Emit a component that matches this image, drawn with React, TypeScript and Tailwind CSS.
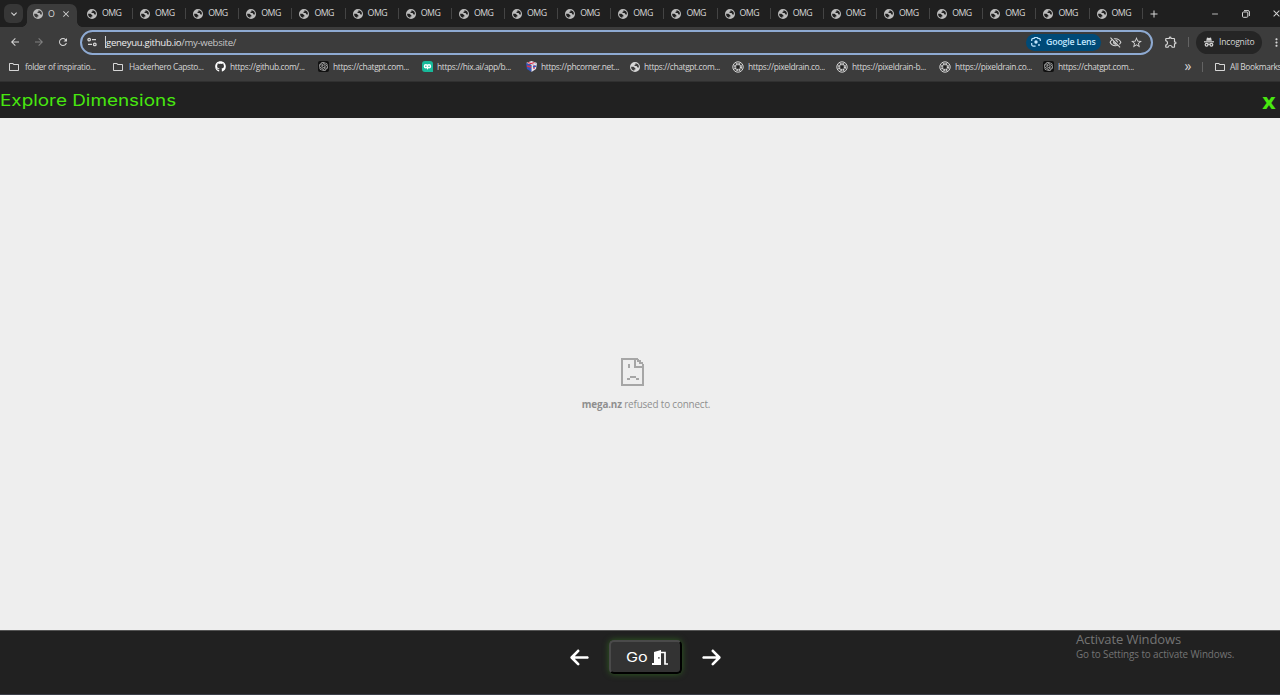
import { ReactNode } from 'react';
import clsx from 'clsx';
import { FaArrowLeft, FaArrowRight, FaGithub } from 'react-icons/fa6';
import {
  MdArrowBack,
  MdArrowForward,
  MdRefresh,
  MdClose,
  MdAdd,
  MdRemove,
  MdExpandMore,
  MdMoreVert,
  MdStarBorder,
  MdOutlineVisibilityOff,
  MdOutlineFolder,
  MdOutlineExtension,
} from 'react-icons/md';
import { SiOpenai } from 'react-icons/si';

type IconName = 'folder' | 'github' | 'openai' | 'hix' | 'corner' | 'globe' | 'drain';

const TABS = Array.from({ length: 20 }, (_, i) => i);

const BOOKMARKS: { icon: IconName; label: string; w: string }[] = [
  { icon: 'folder', label: 'folder of inspiratio...', w: 'w-[104px]' },
  { icon: 'folder', label: 'Hackerhero Capsto...', w: 'w-[103px]' },
  { icon: 'github', label: 'https://github.com/...', w: 'w-[103px]' },
  { icon: 'openai', label: 'https://chatgpt.com...', w: 'w-[104px]' },
  { icon: 'hix', label: 'https://hix.ai/app/b...', w: 'w-[104px]' },
  { icon: 'corner', label: 'https://phcorner.net...', w: 'w-[103px]' },
  { icon: 'globe', label: 'https://chatgpt.com...', w: 'w-[103px]' },
  { icon: 'drain', label: 'https://pixeldrain.co...', w: 'w-[104px]' },
  { icon: 'drain', label: 'https://pixeldrain-b...', w: 'w-[103px]' },
  { icon: 'drain', label: 'https://pixeldrain.co...', w: 'w-[104px]' },
  { icon: 'openai', label: 'https://chatgpt.com...', w: 'w-[103px]' },
];

export default function App() {
  return (
    <div className="flex h-[695px] w-[1280px] flex-col overflow-hidden border-b border-[#3a3d46] bg-[#212121] font-['Open_Sans','Noto_Sans',sans-serif] text-[8px] text-[#d6d6d6]">
      <TabStrip />
      <Toolbar />
      <BookmarksBar />

      {/* Page header */}
      <header className="flex h-[36px] shrink-0 items-center justify-between bg-[#212121] pr-1 text-[#48e80f]">
        <h1 className="origin-left scale-x-[1.18] whitespace-nowrap font-['Inter',sans-serif] text-[16px] leading-none">
          Explore Dimensions
        </h1>
        <button className="mb-px origin-right scale-x-[1.05] text-[22px] font-bold leading-none">x</button>
      </header>

      {/* Blocked frame */}
      <main className="flex h-[512px] shrink-0 flex-col items-center bg-[#eeeeee] pt-[240px] text-[#8f8f8f]">
        <div className="mr-[15px]">
          <SadPage />
        </div>
        <p className="ml-[12px] mt-[11px] whitespace-nowrap text-[9.9px] leading-[14px] tracking-[-0.16px]">
          <strong>mega.nz</strong> refused to connect.
        </p>
      </main>

      <footer className="relative flex grow items-start justify-center border-t border-[#555] bg-[#212121] pt-[9px] pl-[11px]">
        <div className="flex items-center gap-[19px] text-white">
          <FaArrowLeft className="size-[21px]" />
          <button className="flex h-[34px] w-[73px] items-center justify-center gap-[5px] rounded-[5px] border-2 border-t-[#4a4a4a] border-l-[#4a4a4a] border-b-black border-r-black bg-[#333] shadow-[0_0_6px_#2f5f20]">
            <span className="w-[23px] pt-[2px]">
              <span className="inline-block origin-left scale-x-[1.24] font-['Inter',sans-serif] text-[13px] leading-none">Go</span>
            </span>
            <DoorIcon />
          </button>
          <FaArrowRight className="size-[21px]" />
        </div>
        {/* System watermark floating over the bar */}
        <div className="absolute left-[1076px] top-0 whitespace-nowrap text-[#747474]">
          <p className="text-[13px] leading-[17px] tracking-[-0.1px]">Activate Windows</p>
          <p className="text-[9.9px] leading-[13px] tracking-[-0.1px]">Go to Settings to activate Windows.</p>
        </div>
      </footer>
    </div>
  );
}

function TabStrip() {
  return (
    <div className="flex h-[27px] shrink-0 items-center bg-[#1f1f1f]">
      <div className="ml-1 flex size-[19px] shrink-0 items-center justify-center rounded-[6px] bg-[#373737]">
        <MdExpandMore className="size-[12px]" />
      </div>
      <div className="relative ml-1 mt-1 flex h-[23px] w-[50px] shrink-0 items-center rounded-t-[7px] bg-[#3c3c3c] pb-[3px] pl-[6px]">
        {/* Flared feet of the active tab */}
        <span className="absolute bottom-0 left-[-5px] size-[5px] bg-[radial-gradient(circle_at_top_left,transparent_4.5px,#3c3c3c_5px)]" />
        <span className="absolute bottom-0 right-[-5px] size-[5px] bg-[radial-gradient(circle_at_top_right,transparent_4.5px,#3c3c3c_5px)]" />
        <GlobeIcon className="size-[10px] shrink-0 text-[#bdbdbd]" />
        <span className="ml-[5px] w-[9px] pt-px text-[8.8px]">O</span>
        <MdClose className="ml-[4px] size-[10px]" />
      </div>
      {TABS.map((i) => (
        <div key={i} className={clsx('flex h-[11px] w-[53.15px] shrink-0 items-center border-r border-[#444]', i === 0 && 'ml-[2.9px]')}>
          <GlobeIcon className="ml-[7px] size-[10px] shrink-0 text-[#bdbdbd]" />
          <span className="ml-[5px] text-[8.8px] tracking-[-0.55px]">OMG</span>
        </div>
      ))}
      <MdAdd className="ml-[5px] size-[12px] shrink-0" />
      <MdRemove className="ml-[50px] size-[10px] shrink-0" />
      <RestoreIcon />
      <MdClose className="ml-[21px] size-[11px] shrink-0" />
    </div>
  );
}

function Toolbar() {
  return (
    <div className="flex h-[30px] shrink-0 items-center bg-[#3c3c3c]">
      <MdArrowBack className="ml-[9px] size-[12px] shrink-0" />
      <MdArrowForward className="ml-[12px] size-[12px] shrink-0 text-[#808080]" />
      <MdRefresh className="ml-[12px] size-[12px] shrink-0" />
      <div className="ml-[11px] flex h-[25px] w-[1073px] shrink-0 items-center rounded-full border-2 border-[#8eaad2] px-[5px]">
        <TuneIcon />
        <span className="ml-[8px] h-[12px] w-px bg-[#d0d0d0]" />
        <span className="whitespace-nowrap pt-[2px] text-[9.6px] tracking-[-0.3px] text-[#c7c7c7]">
          <span className="text-[#eeeeee]">geneyuu.github.io</span>/my-website/
        </span>
        <div className="ml-auto flex h-[17px] w-[75px] items-center gap-[5px] rounded-full bg-[#004a77] pl-[5px] text-[8.8px] font-semibold tracking-[-0.17px] text-[#c2e7ff]">
          <LensIcon />
          <span className="whitespace-nowrap pt-[2px]">Google Lens</span>
        </div>
        <MdOutlineVisibilityOff className="ml-[8px] size-[13px]" />
        <MdStarBorder className="ml-[8px] mr-[3px] size-[13px]" />
      </div>
      <MdOutlineExtension className="ml-[11px] size-[14px] shrink-0" />
      <span className="ml-[10px] h-[10px] w-px shrink-0 bg-[#636363]" />
      <div className="ml-[7px] flex h-[23px] w-[66px] shrink-0 items-center gap-[5px] rounded-full bg-[#252525] pl-[8px]">
        <IncognitoIcon />
        <span className="text-[8.6px] tracking-[-0.2px]">Incognito</span>
      </div>
      <MdMoreVert className="ml-[8px] size-[13px] shrink-0" />
    </div>
  );
}

function BookmarksBar() {
  return (
    <nav className="flex h-[25px] shrink-0 items-center border-b border-[#303030] bg-[#3c3c3c] pb-[4px] pl-[8px] text-[8.4px] tracking-[-0.35px]">
      {BOOKMARKS.map((b, i) => (
        <div key={i} className={clsx('flex shrink-0 items-center', b.icon === 'folder' ? 'gap-[5px]' : 'gap-[4px]', b.w)}>
          <Favicon name={b.icon} />
          <span className="whitespace-nowrap">{b.label}</span>
        </div>
      ))}
      <span className="ml-auto mr-[11px] pb-[2px] text-[14px] leading-none">»</span>
      <span className="mr-[11px] h-[10px] w-px shrink-0 bg-[#636363]" />
      <div className="flex w-[66px] shrink-0 items-center gap-[4px]">
        <MdOutlineFolder className="size-[12px] shrink-0" />
        <span className="whitespace-nowrap">All Bookmarks</span>
      </div>
    </nav>
  );
}

function Favicon({ name }: { name: IconName }): ReactNode {
  if (name === 'folder') return <MdOutlineFolder className="size-[12px] shrink-0" />;
  if (name === 'github') return <FaGithub className="size-[11px] shrink-0 text-white" />;
  if (name === 'globe') return <GlobeIcon className="ml-px size-[10px] shrink-0" />;
  if (name === 'openai') {
    return (
      <span className="flex size-[11px] shrink-0 items-center justify-center rounded-[2px] bg-[#111]">
        <SiOpenai className="size-[9px]" />
      </span>
    );
  }
  if (name === 'hix') {
    return (
      <svg viewBox="0 0 11 11" className="size-[11px] shrink-0">
        <path d="M3 0h5a3 3 0 0 1 3 3v8H3a3 3 0 0 1-3-3V3a3 3 0 0 1 3-3Z" fill="#18b99a" />
        <g fill="none" stroke="#fff" strokeWidth="1.4">
          <circle cx="3.9" cy="5.3" r="1.5" />
          <circle cx="7" cy="5.3" r="1.5" />
        </g>
        <path d="M5.5 5v3.4" stroke="#fff" strokeWidth="1" />
      </svg>
    );
  }
  if (name === 'corner') {
    return (
      <svg viewBox="0 0 11 11" className="size-[11px] shrink-0">
        <path d="M0 2 5.5 0 11 2 5.5 4Z" fill="#e9eaf4" />
        <path d="M0 2 5.5 4v7L1 8Z" fill="#3456bd" />
        <path d="M11 2 5.5 4v7L10 8Z" fill="#e5e2ee" />
        <path d="m2 1.5 3 1 3.5-1M1 5l4 1M8 4v4" stroke="#d9354b" strokeWidth="1.3" fill="none" />
        <path d="m7 6 3-1" stroke="#3456bd" strokeWidth="1.4" />
      </svg>
    );
  }
  return (
    <svg viewBox="0 0 12 12" className="size-[12px] shrink-0" fill="none" stroke="currentColor">
      <circle cx="6" cy="6" r="5.2" strokeWidth="1" />
      <circle cx="6" cy="6" r="3" strokeWidth="2" strokeDasharray="1.6 .76" />
      <circle cx="6" cy="6" r="1.2" fill="#222" stroke="none" />
    </svg>
  );
}

// Solid disc with the continents cut out, used for pages without a favicon.
function GlobeIcon({ className }: { className?: string }) {
  return (
    <svg viewBox="0 0 22 22" className={className}>
      <path
        fill="currentColor"
        fillRule="evenodd"
        d="M11 0a11 11 0 1 0 0 22a11 11 0 0 0 0-22ZM2.5 10.5h5.5l4 4v2H9.5v3A8.7 8.7 0 0 1 2.5 10.5ZM12 2.5a8.7 8.7 0 0 1 7.5 9.5h-3l-2-3h-4.5V6h2Z"
      />
    </svg>
  );
}

function RestoreIcon() {
  return (
    <svg viewBox="0 0 8 8" className="ml-[22px] size-[8px] shrink-0" fill="none" stroke="currentColor">
      <rect x=".5" y="2" width="5.3" height="5.3" rx="1" />
      <path d="M2 .6h4a1.4 1.4 0 0 1 1.4 1.4v4" />
    </svg>
  );
}

function TuneIcon() {
  return (
    <svg viewBox="0 0 10 10" className="size-[10px] shrink-0" fill="none" stroke="currentColor" strokeWidth="1.3">
      <circle cx="2.2" cy="2.6" r="1.3" />
      <path d="M5 2.6h4M1 7.4h4" />
      <circle cx="7.8" cy="7.4" r="1.3" />
    </svg>
  );
}

function LensIcon() {
  return (
    <svg viewBox="0 0 10 10" className="size-[10px] shrink-0" fill="none" stroke="currentColor" strokeWidth="1.2">
      <path d="M.7 4V3A1.7 1.7 0 0 1 2.4 1.3h.7l.7-.8h2.4l.7.8h.7A1.7 1.7 0 0 1 9.3 3v1M.7 6v1.4A1.7 1.7 0 0 0 2.4 9.2h2.2" />
      <circle cx="5" cy="5" r="1.7" fill="currentColor" stroke="none" />
      <circle cx="8" cy="8" r=".9" fill="currentColor" stroke="none" />
    </svg>
  );
}

function IncognitoIcon() {
  return (
    <svg viewBox="0 0 10 10" className="size-[10px] shrink-0" fill="none" stroke="currentColor" strokeWidth="1.2">
      <path d="M2.2 3.7 3 .5l2 .6L7 .5l.8 3.2Z" fill="currentColor" stroke="none" />
      <path d="M0 4.8h10" />
      <circle cx="2.6" cy="7.8" r="1.4" />
      <circle cx="7.4" cy="7.8" r="1.4" />
      <path d="M4 7.5q1-.6 2 0" />
    </svg>
  );
}

function SadPage() {
  return (
    <svg viewBox="0 0 23 28" className="h-[28px] w-[23px]" fill="none" stroke="#a6a6a6" strokeWidth="2" shapeRendering="crispEdges">
      <path d="M17 1H1v26h21V6M14 2v7h8M17 1v2h2v2h3" />
      <path d="M8 6v4M6 21h3M9 19h6M15 21h3" />
    </svg>
  );
}

function DoorIcon() {
  return (
    <svg viewBox="0 0 16 15" className="h-[15px] w-[16px]">
      <path fillRule="evenodd" fill="#fff" d="M0 13h2V2l7-2v15H0ZM6.3 7v1.7h1.2V7Z" />
      <path d="M9 2.5h4V14h3" fill="none" stroke="#fff" strokeWidth="1.7" />
    </svg>
  );
}
